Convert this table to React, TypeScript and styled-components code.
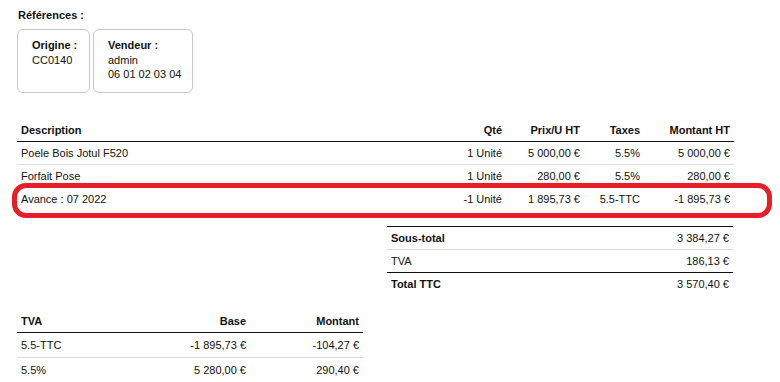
import React from "react";
import styled, { createGlobalStyle } from "styled-components";

const Global = createGlobalStyle`
  html, body { margin: 0; padding: 0; background: #fff; }
  body { font-family: "Liberation Sans", Arial, sans-serif; font-size: 11px; color: #111; }
`;

const Page = styled.div`
  position: relative;
  padding: 9px 46px 0 17px;
  width: 717px;
`;

const Title = styled.div`
  font-weight: bold;
  line-height: 13px;
  margin-left: 1px;
`;

const Refs = styled.div`
  display: flex;
  gap: 3px;
  margin-top: 7px;
`;

const RefBox = styled.div<{ $w: number }>`
  box-sizing: border-box;
  width: ${(p) => p.$w}px;
  height: 64px;
  border: 1px solid #c8c8c8;
  border-radius: 6px;
  padding: 8px 0 0 14px;
  line-height: 14.5px;
  white-space: nowrap;
`;

const RefLabel = styled.div`
  font-weight: bold;
`;

const Grid = styled.div<{ $cols: string; $w: number; $ml?: string }>`
  display: grid;
  grid-template-columns: ${(p) => p.$cols};
  width: ${(p) => p.$w}px;
  margin-left: ${(p) => p.$ml || "0"};
`;

const Row = styled.div<{ $border: "dark" | "light" | "none"; $top?: boolean }>`
  display: contents;
  & > div {
    border-bottom: ${(p) =>
      p.$border === "dark" ? "1px solid #111" : p.$border === "light" ? "1px solid #ddd" : "none"};
    border-top: ${(p) => (p.$top ? "1px solid #111" : "none")};
  }
`;

const Cell = styled.div<{ $right?: boolean; $bold?: boolean }>`
  padding: 4px 4px;
  line-height: 14px;
  text-align: ${(p) => (p.$right ? "right" : "left")};
  font-weight: ${(p) => (p.$bold ? "bold" : "normal")};
  white-space: nowrap;
`;

const HighlightCell = styled(Cell)`
  position: relative;
`;

const Highlight = styled.div`
  position: absolute;
  top: -5px;
  bottom: -8px;
  left: -5px;
  width: 760px;
  box-sizing: border-box;
  border: 5px solid #e61e28;
  border-radius: 14px;
  pointer-events: none;
`;

const MainTable = styled(Grid)`
  margin-top: 26px;
`;

const Totals = styled(Grid)`
  margin-top: 16px;
`;

const TvaTable = styled(Grid)`
  margin-top: 15px;
`;

const TvaRowCell = styled(Cell)`
  padding: 5px 4px;
`;

const lines = [
  ["Poele Bois Jotul F520", "1 Unité", "5 000,00 €", "5.5%", "5 000,00 €"],
  ["Forfait Pose", "1 Unité", "280,00 €", "5.5%", "280,00 €"],
];

export default function App() {
  return (
    <>
      <Global />
      <Page>
        <Title>Références :</Title>
        <Refs>
          <RefBox $w={73}>
            <RefLabel>Origine :</RefLabel>
            <div>CC0140</div>
          </RefBox>
          <RefBox $w={100}>
            <RefLabel>Vendeur :</RefLabel>
            <div>admin</div>
            <div>06 01 02 03 04</div>
          </RefBox>
        </Refs>

        <MainTable $cols="1fr 80px 78px 60px 90px" $w={717}>
          <Row $border="dark">
            <Cell $bold>Description</Cell>
            <Cell $bold $right>Qté</Cell>
            <Cell $bold $right>Prix/U HT</Cell>
            <Cell $bold $right>Taxes</Cell>
            <Cell $bold $right>Montant HT</Cell>
          </Row>
          {lines.map((l) => (
            <Row key={l[0]} $border="light">
              <Cell>{l[0]}</Cell>
              <Cell $right>{l[1]}</Cell>
              <Cell $right>{l[2]}</Cell>
              <Cell $right>{l[3]}</Cell>
              <Cell $right>{l[4]}</Cell>
            </Row>
          ))}
          <Row $border="none">
            <HighlightCell>
              Avance : 07 2022
              <Highlight />
            </HighlightCell>
            <Cell $right>-1 Unité</Cell>
            <Cell $right>1 895,73 €</Cell>
            <Cell $right>5.5-TTC</Cell>
            <Cell $right>-1 895,73 €</Cell>
          </Row>
        </MainTable>

        <Totals $cols="1fr 1fr" $w={346} $ml="370px">
          <Row $border="light" $top>
            <Cell $bold>Sous-total</Cell>
            <Cell $right>3 384,27 €</Cell>
          </Row>
          <Row $border="dark">
            <Cell>TVA</Cell>
            <Cell $right>186,13 €</Cell>
          </Row>
          <Row $border="none">
            <Cell $bold>Total TTC</Cell>
            <Cell $right>3 570,40 €</Cell>
          </Row>
        </Totals>

        <TvaTable $cols="113px 120px 113px" $w={346}>
          <Row $border="dark">
            <Cell $bold>TVA</Cell>
            <Cell $bold $right>Base</Cell>
            <Cell $bold $right>Montant</Cell>
          </Row>
          <Row $border="light">
            <TvaRowCell>5.5-TTC</TvaRowCell>
            <TvaRowCell $right>-1 895,73 €</TvaRowCell>
            <TvaRowCell $right>-104,27 €</TvaRowCell>
          </Row>
          <Row $border="none">
            <TvaRowCell>5.5%</TvaRowCell>
            <TvaRowCell $right>5 280,00 €</TvaRowCell>
            <TvaRowCell $right>290,40 €</TvaRowCell>
          </Row>
        </TvaTable>
      </Page>
    </>
  );
}
